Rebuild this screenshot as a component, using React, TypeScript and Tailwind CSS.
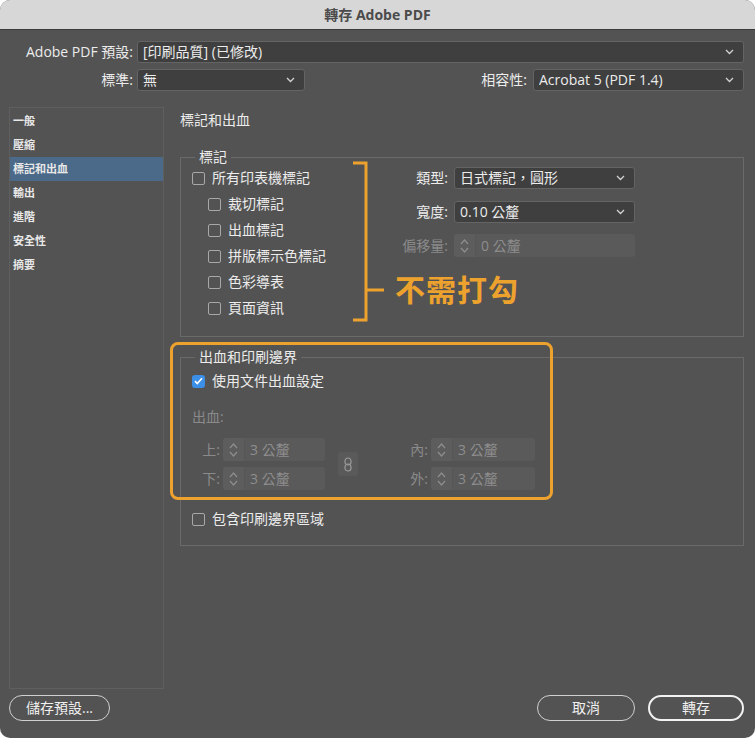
import { FC } from 'react';

const ORANGE = '#eea22e';

const Chevron: FC = () => (
  <svg width="9" height="6" viewBox="0 0 9 6" className="shrink-0">
    <path d="M1 1l3.5 3.5L8 1" fill="none" stroke="#d2d2d2" strokeWidth="1.3" />
  </svg>
);

const StepIcon: FC = () => (
  <svg width="9" height="16" viewBox="0 0 9 16">
    <path d="M1 6l3.5-4L8 6M1 10l3.5 4L8 10" fill="none" stroke="#8e8e8e" strokeWidth="1.2" />
  </svg>
);

const Select: FC<{ value: string; className?: string }> = ({ value, className = '' }) => (
  <div
    className={`h-[22px] flex items-center justify-between pl-[5px] pr-[9px] bg-[#3f3f3f] border border-[#646464] rounded-[3px] text-[14px] text-[#ececec] ${className}`}
  >
    <span className="truncate">{value}</span>
    <Chevron />
  </div>
);

const Spin: FC<{ value: string; w: string }> = ({ value, w }) => (
  <div className="flex h-[23px]">
    <div className="w-[22px] bg-[#5d5d5d] rounded-l-[3px] border-r border-[#565656] flex items-center justify-center">
      <StepIcon />
    </div>
    <div className={`${w} bg-[#5a5a5a] rounded-r-[3px] pl-[5px] flex items-center text-[14px] text-[#8d8d8d]`}>{value}</div>
  </div>
);

const Box: FC<{ checked?: boolean }> = ({ checked }) =>
  checked ? (
    <span className="w-[13px] h-[13px] rounded-[3px] bg-[#3b8fe6] flex items-center justify-center shrink-0">
      <svg width="9" height="8" viewBox="0 0 9 8">
        <path d="M1 4.2l2.3 2.3L8 1.3" fill="none" stroke="#fff" strokeWidth="1.7" />
      </svg>
    </span>
  ) : (
    <span className="w-[13px] h-[13px] rounded-[2px] border border-[#a8a8a8] shrink-0" />
  );

const Check: FC<{ label: string; checked?: boolean; className?: string }> = ({ label, checked, className = '' }) => (
  <div className={`flex items-center gap-[7px] h-[26px] text-[14px] text-[#ececec] ${className}`}>
    <Box checked={checked} />
    <span>{label}</span>
  </div>
);

const sideItems = ['一般', '壓縮', '標記和出血', '輸出', '進階', '安全性', '摘要'];

export default function App() {
  return (
    <div className="relative w-[755px] h-[738px] bg-white leading-[20px] font-['Open_Sans','Noto_Sans_CJK_TC',sans-serif]">
      <div className="h-full rounded-[10px] overflow-hidden bg-[#535353] flex flex-col">
        {/* title bar */}
        <div className="h-[30px] shrink-0 bg-[#d7d7d7] border-b border-[#3b3b3b] flex items-center justify-center text-[14px] font-bold text-[#4b4b4b]">
          轉存 Adobe PDF
        </div>

        {/* preset rows */}
        <div className="pt-[11px] pr-[11px] flex flex-col gap-[6px]">
          <div className="flex items-center">
            <div className="w-[133px] text-right text-[14px] text-[#ececec]">Adobe PDF 預設:</div>
            <Select value="[印刷品質] (已修改)" className="ml-[4px] flex-1" />
          </div>
          <div className="flex items-center">
            <div className="w-[133px] text-right text-[14px] text-[#ececec]">標準:</div>
            <Select value="無" className="ml-[4px] w-[168px]" />
            <div className="flex-1 text-right text-[14px] text-[#ececec] pr-[6px]">相容性:</div>
            <Select value="Acrobat 5 (PDF 1.4)" className="w-[211px]" />
          </div>
        </div>

        {/* main */}
        <div className="mt-[16px] h-[582px] flex pl-[9px] pr-[11px]">
          <div className="w-[155px] h-full border border-[#5f5f5f] pt-[1px] shrink-0">
            {sideItems.map((s, i) => (
              <div
                key={s}
                className={`h-[24px] flex items-center pl-[3px] text-[11px] font-bold text-[#e8e8e8] ${
                  i === 2 ? 'bg-[#4b6a89]' : ''
                }`}
              >
                {s}
              </div>
            ))}
          </div>

          <div className="ml-[16px] flex-1 flex flex-col">
            <div className="pt-[3px] h-[23px] leading-[20px] text-[14px] text-[#ececec]">標記和出血</div>

            {/* marks */}
            <fieldset className="mt-[17px] h-[190px] border border-[#6a6a6a]">
              <legend className="ml-[14px] px-[4px] text-[14px] leading-[20px] text-[#ececec]">標記</legend>
              <div className="flex pl-[11px]">
                <div className="w-[203px] -mt-[2px] flex flex-col">
                  <Check label="所有印表機標記" />
                  <Check label="裁切標記" className="pl-[16px]" />
                  <Check label="出血標記" className="pl-[16px]" />
                  <Check label="拼版標示色標記" className="pl-[16px]" />
                  <Check label="色彩導表" className="pl-[16px]" />
                  <Check label="頁面資訊" className="pl-[16px]" />
                </div>
                <div className="flex flex-col gap-[12px]">
                  <div className="flex items-center">
                    <div className="w-[53px] text-right text-[14px] text-[#ececec]">類型:</div>
                    <Select value="日式標記，圓形" className="ml-[6px] w-[181px]" />
                  </div>
                  <div className="flex items-center">
                    <div className="w-[53px] text-right text-[14px] text-[#ececec]">寬度:</div>
                    <Select value="0.10 公釐" className="ml-[6px] w-[181px]" />
                  </div>
                  <div className="flex items-center -mt-[1px]">
                    <div className="w-[53px] text-right text-[14px] text-[#8a8a8a]">偏移量:</div>
                    <div className="ml-[6px]">
                      <Spin value="0 公釐" w="w-[159px]" />
                    </div>
                  </div>
                </div>
              </div>
            </fieldset>

            {/* bleed */}
            <fieldset className="mt-[10px] h-[199px] border border-[#6a6a6a]">
              <legend className="ml-[14px] px-[4px] text-[14px] leading-[20px] text-[#ececec]">出血和印刷邊界</legend>
              <div className="pl-[11px] flex flex-col">
                <Check label="使用文件出血設定" checked className="mt-[1px] h-[24px]" />
                <div className="mt-[13px] h-[20px] leading-[20px] text-[14px] text-[#8a8a8a]">出血:</div>
                <div className="mt-[11px] flex items-center">
                  <div className="flex flex-col gap-[6px]">
                    <div className="flex items-center">
                      <div className="w-[31px] text-right pr-[3px] text-[14px] text-[#8a8a8a]">上:</div>
                      <Spin value="3 公釐" w="w-[80px]" />
                    </div>
                    <div className="flex items-center">
                      <div className="w-[31px] text-right pr-[3px] text-[14px] text-[#8a8a8a]">下:</div>
                      <Spin value="3 公釐" w="w-[80px]" />
                    </div>
                  </div>
                  <div className="ml-[13px] w-[20px] h-[24px] bg-[#5a5a5a] rounded-[3px] flex items-center justify-center">
                    <svg width="8" height="15" viewBox="0 0 8 15">
                      <rect x="1" y="1" width="6" height="7" rx="3" fill="none" stroke="#9a9a9a" strokeWidth="1.2" />
                      <rect x="1" y="7" width="6" height="7" rx="3" fill="none" stroke="#9a9a9a" strokeWidth="1.2" />
                    </svg>
                  </div>
                  <div className="flex flex-col gap-[6px]">
                    <div className="flex items-center">
                      <div className="w-[73px] text-right pr-[3px] text-[14px] text-[#8a8a8a]">內:</div>
                      <Spin value="3 公釐" w="w-[82px]" />
                    </div>
                    <div className="flex items-center">
                      <div className="w-[73px] text-right pr-[3px] text-[14px] text-[#8a8a8a]">外:</div>
                      <Spin value="3 公釐" w="w-[82px]" />
                    </div>
                  </div>
                </div>
                <Check label="包含印刷邊界區域" className="mt-[16px] h-[24px]" />
              </div>
            </fieldset>
          </div>
        </div>

        {/* buttons */}
        <div className="pt-[6px] pl-[9px] pr-[11px] flex items-center">
          <button className="w-[101px] h-[26px] rounded-full border border-[#d0d0d0] text-[14px] text-[#f0f0f0]">儲存預設...</button>
          <div className="flex-1" />
          <button className="w-[98px] h-[26px] rounded-full border border-[#d0d0d0] text-[14px] text-[#f0f0f0]">取消</button>
          <button className="ml-[13px] w-[96px] h-[26px] rounded-full border-2 border-[#f2f2f2] text-[14px] text-[#f0f0f0]">轉存</button>
        </div>
      </div>

      {/* annotations */}
      <div className="absolute left-[170px] top-[342px] w-[383px] h-[158px] rounded-[8px] border-[3px] border-[#eea22e]" />
      <svg className="absolute left-[350px] top-[160px]" width="40" height="166" viewBox="0 0 40 166">
        <path d="M3 3H16V160H3M16 130H34" fill="none" stroke={ORANGE} strokeWidth="3" />
      </svg>
      <div className="absolute left-[395px] top-[272px] text-[30px] leading-[36px] font-bold text-[#eea22e] tracking-[1px]">
        不需打勾
      </div>
    </div>
  );
}
